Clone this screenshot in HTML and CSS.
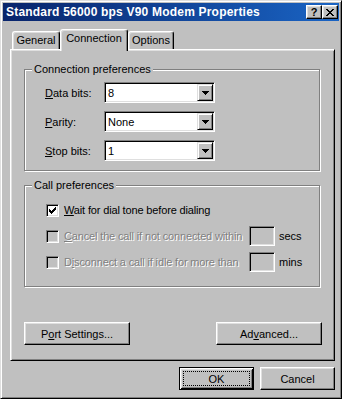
FILE: index.html
```html
<html lang="en">
  <head>
    <meta charset="utf-8">
    <link rel="stylesheet" href="styles.css">
  </head>
  <body>
    <div class="window">
      <div class="title-bar">
        <span class="title">Standard 56000 bps V90 Modem Properties</span>
        <div class="title-buttons">
          <button class="title-btn help">?</button>
          <button class="title-btn close">
            <svg width="8" height="7" viewBox="0 0 8 7" shape-rendering="crispEdges"><path d="M0 0h2v1h1v1h2v-1h1v-1h2v1h-1v1h-1v1h-1v1h1v1h1v1h1v1h-2v-1h-1v-1h-2v1h-1v1h-2v-1h1v-1h1v-1h1v-1h-1v-1h-1v-1h-1z" fill="#000"/></svg>
          </button>
        </div>
      </div>
      <div class="dialog-body">
        <div class="tabs">
          <div class="tab tab-general">General</div>
          <div class="tab tab-connection selected">Connection</div>
          <div class="tab tab-options">Options</div>
        </div>
        <div class="tab-panel">
          <fieldset class="group conn-group">
            <legend>Connection preferences</legend>
            <div class="field-grid">
              <label><u>D</u>ata bits:</label>
              <div class="select"><span class="value">8</span><span class="arrow-btn"><svg width="7" height="4" viewBox="0 0 7 4" shape-rendering="crispEdges"><path d="M0 0h7v1h-1v1h-1v1h-1v1h-1v-1h-1v-1h-1v-1h-1z" fill="#000"/></svg></span></div>
              <label><u>P</u>arity:</label>
              <div class="select"><span class="value">None</span><span class="arrow-btn"><svg width="7" height="4" viewBox="0 0 7 4" shape-rendering="crispEdges"><path d="M0 0h7v1h-1v1h-1v1h-1v1h-1v-1h-1v-1h-1v-1h-1z" fill="#000"/></svg></span></div>
              <label><u>S</u>top bits:</label>
              <div class="select"><span class="value">1</span><span class="arrow-btn"><svg width="7" height="4" viewBox="0 0 7 4" shape-rendering="crispEdges"><path d="M0 0h7v1h-1v1h-1v1h-1v1h-1v-1h-1v-1h-1v-1h-1z" fill="#000"/></svg></span></div>
            </div>
          </fieldset>
          <fieldset class="group call-group">
            <legend>Call preferences</legend>
            <div class="check-grid">
              <span class="checkbox"><svg width="7" height="7" viewBox="0 0 7 7" shape-rendering="crispEdges"><path d="M6 0h1v3h-1v1h-1v1h-1v1h-1v1h-1v-1h-1v-1h-1v-3h1v1h1v1h1v-1h1v-1h1z" fill="#000"/></svg></span>
              <span class="check-text wide"><u>W</u>ait for dial tone before dialing</span>
              <span class="checkbox disabled"></span>
              <span class="check-text disabled-text"><u>C</u>ancel the call if not connected within</span>
              <span class="num-box"></span>
              <span class="unit">secs</span>
              <span class="checkbox disabled"></span>
              <span class="check-text disabled-text">D<u>i</u>sconnect a call if idle for more than</span>
              <span class="num-box"></span>
              <span class="unit">mins</span>
            </div>
          </fieldset>
          <div class="panel-buttons">
            <button class="btn wide-btn">P<u>o</u>rt Settings...</button>
            <button class="btn wide-btn">Ad<u>v</u>anced...</button>
          </div>
        </div>
        <div class="footer">
          <button class="btn footer-btn default"><span class="focus">OK</span></button>
          <button class="btn footer-btn">Cancel</button>
        </div>
      </div>
    </div>
  </body>
</html>
```

FILE: styles.css
```css
body {
  margin: 0;
  background-color: #c0c0c0;
  color: #000;
  font-family: "Liberation Sans", Arial, sans-serif;
  font-size: 11px;
}

u {
  text-decoration: underline;
  text-underline-offset: 1px;
}

button {
  font-family: inherit;
  font-size: 11px;
  color: #000;
  padding: 0;
  margin: 0;
}

.window {
  width: 342px;
  height: 399px;
  box-sizing: border-box;
  border: 1px solid;
  border-color: #dfdfdf #000 #000 #dfdfdf;
  box-shadow: inset 1px 1px #fff, inset -1px -1px #808080;
  padding: 2px;
  background-color: #c0c0c0;
}

.title-bar {
  display: flex;
  align-items: center;
  height: 18px;
  padding: 0 1px 0 3px;
  background: linear-gradient(to right, #08246b, #1a64c4);
}

.title {
  color: #fff;
  font-weight: bold;
  font-size: 12px;
  letter-spacing: 0.2px;
  white-space: nowrap;
}

.title-buttons {
  display: flex;
  margin-left: auto;
}

.title-btn {
  width: 16px;
  height: 14px;
  display: flex;
  align-items: center;
  justify-content: center;
  background-color: #c0c0c0;
  border: 1px solid;
  border-color: #fff #000 #000 #fff;
  box-shadow: inset -1px -1px #808080, inset 1px 1px #dfdfdf;
}

.help {
  font-weight: bold;
  font-size: 11px;
  line-height: 12px;
}

.dialog-body {
  padding: 8px 4px 0 7px;
}

.tabs {
  display: flex;
  align-items: flex-end;
  padding-left: 2px;
  height: 20px;
}

.tab {
  position: relative;
  box-sizing: border-box;
  height: 18px;
  line-height: 16px;
  text-align: center;
  border: 1px solid;
  border-color: #fff #000 transparent #fff;
  border-bottom: none;
  border-radius: 3px 3px 0 0;
  box-shadow: inset -1px 0 #808080, inset 1px 1px #dfdfdf;
  background-color: #c0c0c0;
}

.tab-general {
  width: 48px;
}

.tab-connection {
  width: 68px;
}

.tab-options {
  width: 46px;
}

.tab.selected {
  z-index: 1;
  height: 22px;
  line-height: 17px;
  margin-bottom: -2px;
}

.tab-panel {
  border: 1px solid;
  border-color: #fff #000 #000 #fff;
  box-shadow: inset 1px 1px #dfdfdf, inset -1px -1px #808080;
  padding: 13px 14px 15px 13px;
}

.group {
  margin: 0;
  min-width: 0;
  border: 1px solid #808080;
  box-shadow: 1px 1px 0 #fff, inset 1px 1px 0 #fff;
}

.group legend {
  padding: 0 2px;
  line-height: 13px;
  background-color: #c0c0c0;
}

.conn-group {
  padding: 6px 0 9px 7px;
}

.call-group {
  margin-top: 8px;
  padding: 8px 0 14px 7px;
}

.field-grid {
  display: grid;
  grid-template-columns: 59px 111px;
  grid-auto-rows: 21px;
  row-gap: 8px;
  align-items: center;
  margin-left: 13px;
}

.select {
  box-sizing: border-box;
  height: 21px;
  display: flex;
  align-items: center;
  background-color: #fff;
  border: 1px solid;
  border-color: #808080 #fff #fff #808080;
  box-shadow: inset 1px 1px #000, inset -1px -1px #dfdfdf;
  padding: 1px 1px 1px 3px;
}

.arrow-btn {
  box-sizing: border-box;
  width: 16px;
  height: 17px;
  margin-left: auto;
  display: flex;
  align-items: center;
  justify-content: center;
  background-color: #c0c0c0;
  border: 1px solid;
  border-color: #dfdfdf #000 #000 #dfdfdf;
  box-shadow: inset 1px 1px #fff, inset -1px -1px #808080;
}

.check-grid {
  display: grid;
  grid-template-columns: 13px 182px 26px auto;
  grid-auto-rows: 20px;
  column-gap: 4px;
  row-gap: 6px;
  align-items: center;
  margin-left: 14px;
}

.checkbox {
  box-sizing: border-box;
  width: 13px;
  height: 13px;
  display: flex;
  align-items: center;
  justify-content: center;
  background-color: #fff;
  border: 1px solid;
  border-color: #808080 #fff #fff #808080;
  box-shadow: inset 1px 1px #000, inset -1px -1px #dfdfdf;
}

.checkbox.disabled {
  background-color: #c0c0c0;
}

.check-text {
  margin-left: 1px;
  white-space: nowrap;
  letter-spacing: -0.15px;
}

.check-text.wide {
  grid-column: 2 / 5;
}

.disabled-text {
  color: #808080;
  text-shadow: 1px 1px 0 #fff;
}

.num-box {
  box-sizing: border-box;
  height: 20px;
  border: 1px solid;
  border-color: #808080 #fff #fff #808080;
  box-shadow: inset 1px 1px #000, inset -1px -1px #dfdfdf;
}

.panel-buttons {
  display: flex;
  justify-content: space-between;
  margin-top: 35px;
  margin-right: -2px;
}

.btn {
  box-sizing: border-box;
  height: 23px;
  display: flex;
  align-items: center;
  justify-content: center;
  background-color: #c0c0c0;
  border: 1px solid;
  border-color: #fff #000 #000 #fff;
  box-shadow: inset -1px -1px #808080, inset 1px 1px #dfdfdf;
}

.wide-btn {
  width: 106px;
}

.footer {
  display: flex;
  justify-content: flex-end;
  gap: 6px;
  margin-top: 6px;
}

.footer-btn {
  width: 75px;
}

.btn.default {
  border-color: #000;
  box-shadow: inset 1px 1px #fff, inset -1px -1px #000, inset 2px 2px #dfdfdf, inset -2px -2px #808080;
  padding: 3px;
}

.focus {
  flex: 1;
  align-self: stretch;
  display: flex;
  align-items: center;
  justify-content: center;
  border: 1px dotted #000;
}
```
